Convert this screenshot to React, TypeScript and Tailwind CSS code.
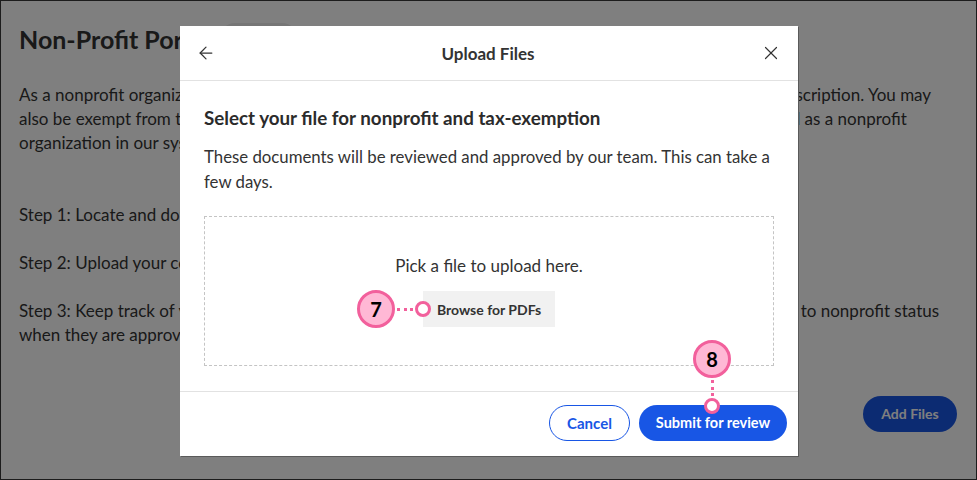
import { ArrowLeft, X } from 'lucide-react';

function Marker({ n }: { n: number }) {
    return (
        <div className="flex h-[38px] w-[38px] items-center justify-center rounded-full border-[3px] border-[#f2609c] bg-[#ffb8d5] text-[20px] font-bold text-black">
            {n}
        </div>
    );
}

function Dot() {
    return <div className="h-[16px] w-[16px] rounded-full border-[3px] border-[#f2609c] bg-white" />;
}

export default function App() {
    return (
        <div
            className="relative h-[480px] w-[977px] overflow-hidden border border-[#1c1c1c] bg-white text-[#333]"
            style={{ fontFamily: 'Lato, "Open Sans", sans-serif' }}
        >
            {/* Page behind the dialog */}
            <div className="px-[18px] pt-[22px]">
                <div className="flex items-center gap-[8px]">
                    <h1 className="text-[25px] font-bold leading-[28px] text-[#333]">Non-Profit Portal</h1>
                    <span className="rounded-full bg-[#ececec] px-4 py-[6px] text-[13px] font-bold">Pending</span>
                </div>
                <p className="mt-[28px] whitespace-nowrap text-[17px] leading-6">
                    As a nonprofit organization, you may be eligible for a special discount on your own Constant Contact subscription. You may
                    <br />
                    also be exempt from taxes in your state. Upload your documents so your account can be properly labelled as a nonprofit
                    <br />
                    organization in our system.
                </p>
                <p className="mt-[48px] text-[17px] leading-6">Step 1: Locate and download your tax-exempt documents.</p>
                <p className="mt-[24px] text-[17px] leading-6">Step 2: Upload your completed documents.</p>
                <p className="mt-[24px] whitespace-nowrap text-[17px] leading-6">
                    Step 3: Keep track of your documents' status on this page. Once reviewed, we shall convert your account to nonprofit status
                    <br />
                    when they are approved.
                </p>
                <div className="mt-[49px] flex justify-end pr-[1px]">
                    <button className="h-[36px] w-[94px] rounded-full bg-[#1856e5] text-[14px] font-bold text-white">
                        Add Files
                    </button>
                </div>
            </div>

            {/* Overlay */}
            <div className="absolute inset-0 bg-black/50" />

            {/* Dialog */}
            <div className="absolute left-[179px] top-[25px] flex h-[430px] w-[618px] flex-col bg-white shadow-[1px_1px_0_#5a5a5a]">
                <div className="flex h-[55px] items-center justify-between border-b border-[#e2e2e2] px-[16px]">
                    <ArrowLeft size={20} strokeWidth={1.5} className="text-[#333]" />
                    <div className="pt-[2px] text-[17px] font-bold text-[#333]">Upload Files</div>
                    <X size={22} strokeWidth={1.3} className="text-[#333]" />
                </div>

                <div className="flex-1 px-[24px] pt-[25px]">
                    <h2 className="text-[18.8px] font-bold leading-6 text-[#2b2b2b]">
                        Select your file for nonprofit and tax-exemption
                    </h2>
                    <p className="mt-[14px] whitespace-nowrap text-[16.8px] leading-[25px] text-[#333]">
                        These documents will be reviewed and approved by our team. This can take a
                        <br />
                        few days.
                    </p>
                    <div className="mt-[22px] flex h-[150px] flex-col items-center border border-dashed border-[#c4c4c4] pt-[37px]">
                        <div className="text-[17px] leading-6 text-[#333]">Pick a file to upload here.</div>
                        <div className="relative mt-[13px]">
                            <button className="h-[36px] w-[132px] bg-[#f1f1f1] text-[14px] font-bold text-[#333]">
                                Browse for PDFs
                            </button>
                            <div className="absolute left-[-66px] top-[-1px] flex items-center">
                                <Marker n={7} />
                                <div className="mx-[2px] w-[16px] border-t-[3px] border-dotted border-[#f2609c]" />
                                <Dot />
                            </div>
                        </div>
                    </div>
                </div>

                <div className="flex h-[65px] items-center justify-end gap-[9px] border-t border-[#e2e2e2] px-[11px] pb-[2px]">
                    <button className="h-[36px] w-[81px] rounded-full border border-[#1856e5] text-[15px] font-bold text-[#1856e5]">
                        Cancel
                    </button>
                    <div className="relative">
                        <button className="h-[36px] w-[148px] rounded-full bg-[#1856e5] text-[14.5px] font-bold text-white">
                            Submit for review
                        </button>
                        <div className="absolute left-[54px] top-[-65px] flex flex-col items-center">
                            <Marker n={8} />
                            <div className="my-[2px] h-[16px] border-l-[3px] border-dotted border-[#f2609c]" />
                            <Dot />
                        </div>
                    </div>
                </div>
            </div>
        </div>
    );
}
